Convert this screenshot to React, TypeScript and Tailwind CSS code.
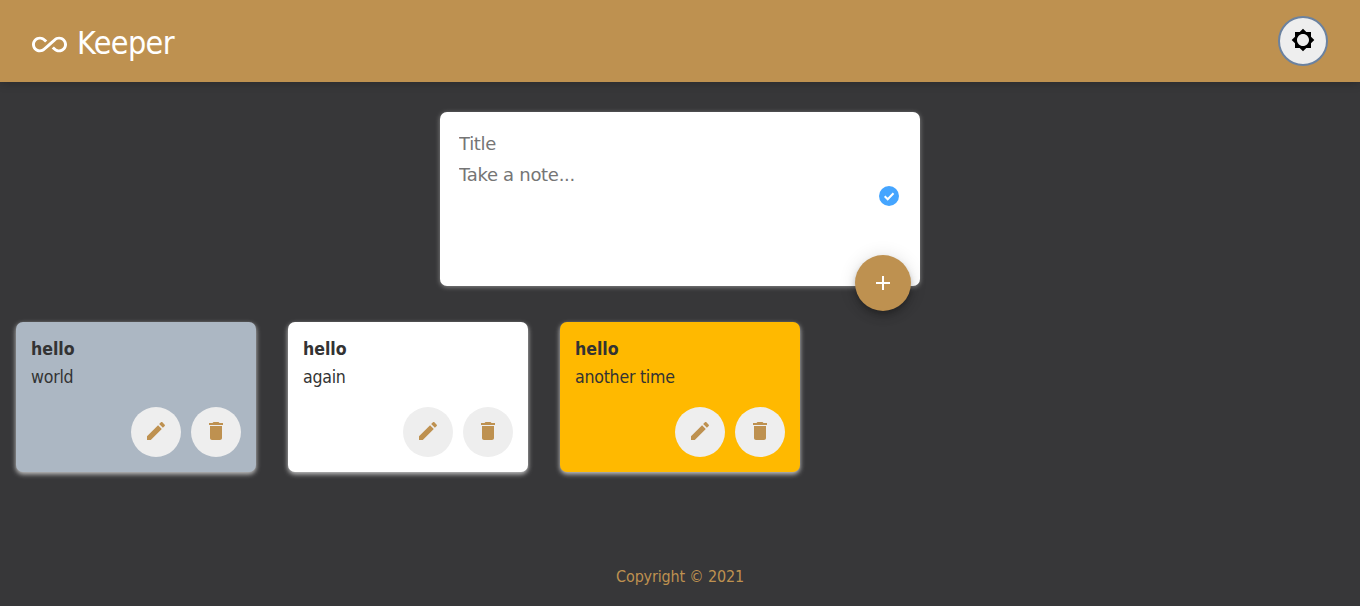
import React from "react";

const ICONS = {
  infinity:
    "M18.6 6.62c-1.44 0-2.8.56-3.77 1.53L12 10.66 10.48 12h.01L7.8 14.39c-.64.64-1.49.99-2.4.99-1.87 0-3.39-1.51-3.39-3.38S3.53 8.62 5.4 8.62c.91 0 1.76.35 2.44 1.03l1.13 1 1.51-1.34L9.22 8.2C8.2 7.18 6.84 6.62 5.4 6.62 2.42 6.62 0 9.04 0 12s2.42 5.38 5.4 5.38c1.44 0 2.8-.56 3.77-1.53l2.83-2.5.01.01L13.52 12h-.01l2.69-2.39c.64-.64 1.49-.99 2.4-.99 1.87 0 3.39 1.51 3.39 3.38s-1.52 3.38-3.39 3.38c-.9 0-1.76-.35-2.44-1.03l-1.14-1.01-1.51 1.34 1.27 1.12c1.02 1.01 2.37 1.57 3.82 1.57 2.98 0 5.4-2.41 5.4-5.38s-2.42-5.37-5.4-5.37z",
  sun: "M20 15.31L23.31 12 20 8.69V4h-4.69L12 .69 8.69 4H4v4.69L.69 12 4 15.31V20h4.69L12 23.31 15.31 20H20v-4.69zM12 18c-3.31 0-6-2.69-6-6s2.69-6 6-6 6 2.69 6 6-2.69 6-6 6z",
  add: "M19 13h-6v6h-2v-6H5v-2h6V5h2v6h6v2z",
  edit: "M3 17.25V21h3.75L17.81 9.94l-3.75-3.75L3 17.25zM20.71 7.04c.39-.39.39-1.02 0-1.41l-2.34-2.34c-.39-.39-1.02-.39-1.41 0l-1.83 1.83 3.75 3.75 1.83-1.83z",
  trash: "M6 19c0 1.1.9 2 2 2h8c1.1 0 2-.9 2-2V7H6v12zM19 4h-3.5l-1-1h-5l-1 1H5v2h14V4z",
};

function Icon({ name, className = "size-6" }: { name: keyof typeof ICONS; className?: string }) {
  return (
    <svg viewBox="0 0 24 24" fill="currentColor" className={className} aria-hidden="true">
      <path d={ICONS[name]} />
    </svg>
  );
}

const notes = [
  { title: "hello", content: "world", color: "bg-[#acb7c3]" },
  { title: "hello", content: "again", color: "bg-white" },
  { title: "hello", content: "another time", color: "bg-[#ffb900]" },
];

function Note({ title, content, color }: { title: string; content: string; color: string }) {
  return (
    <article className={`flex h-[150px] w-60 flex-col rounded-[7px] px-[15px] pt-4 pb-[15px] text-[#333] shadow-[0_2px_5px_#ccc] ${color}`}>
      <h2 className="h-[23px] text-[17.6px] leading-[23px] font-bold tracking-[-0.05px]">{title}</h2>
      <p className="mt-[5px] h-[23px] text-[17.6px] leading-[23px] tracking-[-0.25px]">{content}</p>
      <div className="mt-auto flex justify-end gap-[10px] text-[#be9150]">
        <button className="flex size-[50px] items-center justify-center rounded-full bg-[#eee] pb-[2px]">
          <Icon name="edit" />
        </button>
        <button className="flex size-[50px] items-center justify-center rounded-full bg-[#eee] pb-[2px]">
          <Icon name="trash" />
        </button>
      </div>
    </article>
  );
}

export default function App() {
  return (
    <div className="flex h-[606px] flex-col bg-[#373739] font-['DejaVu_Sans_Condensed','DejaVu_Sans',sans-serif]">
      <header className="flex h-[82px] shrink-0 items-center justify-between bg-[#be9150] px-8 shadow-[0_0_10px_rgba(0,0,0,0.3)]">
        <h1 className="flex items-center text-[32px] leading-[48px] tracking-[-0.6px] text-white">
          <Icon name="infinity" className="mt-[6px] mr-[10px] size-[35px]" />
          <span className="mt-[3px]">Keeper</span>
        </h1>
        <button className="flex size-[50px] items-center justify-center rounded-full border-2 border-[#6b82a0] bg-[#eee] pb-[2px] text-black">
          <Icon name="sun" />
        </button>
      </header>
      <main className="flex-1">
        <form className="relative mx-auto mt-[30px] flex h-[174px] w-[480px] flex-col rounded-[7px] bg-white px-[19px] pt-[18px] font-['DejaVu_Sans',sans-serif] text-[18px] tracking-[-0.3px] shadow-[0_1px_5px_#8a8a8a]">
          <input placeholder="Title" className="h-[27px] w-[400px] leading-[27px] outline-none placeholder:text-[#757575]" />
          <textarea placeholder="Take a note..." className="mt-1 h-[100px] w-[400px] resize-none leading-[27px] outline-none placeholder:text-[#757575]" />
          <svg viewBox="0 0 20 20" className="absolute top-[74px] right-[21px] size-5" aria-hidden="true">
            <circle cx="10" cy="10" r="10" fill="#45a5ff" />
            <path d="M5.7 10.2l3 3 5.8-6" fill="none" stroke="white" strokeWidth="2" />
          </svg>
          <button type="button" className="absolute right-[9px] -bottom-[25px] flex size-14 items-center justify-center rounded-full bg-[#be9150] text-white shadow-[0_3px_5px_-1px_rgba(0,0,0,0.2),0_6px_10px_0_rgba(0,0,0,0.14),0_1px_18px_0_rgba(0,0,0,0.12)]">
            <Icon name="add" />
          </button>
        </form>
        <section className="mt-9 flex gap-8 px-4">
          {notes.map((note) => (
            <Note key={note.content} {...note} />
          ))}
        </section>
      </main>
      <footer className="h-[41px] text-center text-base leading-6 tracking-[-0.17px] text-[#be9150]">Copyright © 2021</footer>
    </div>
  );
}
